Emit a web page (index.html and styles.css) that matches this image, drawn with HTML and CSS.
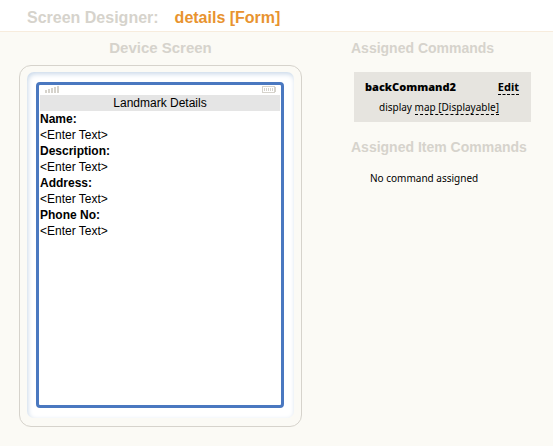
FILE: index.html
```html
<!DOCTYPE html>
<html lang="en">
<head>
<meta charset="utf-8">
<title>Screen Designer</title>
<link rel="stylesheet" href="styles.css">
</head>
<body>
<header class="header">
  <h1 class="title">Screen Designer:</h1>
  <span class="subject">details [Form]</span>
</header>
<main class="designer">
  <section class="device">
    <h2 class="heading heading-center">Device Screen</h2>
    <div class="frame">
      <div class="bezel">
        <div class="screen">
          <div class="status">
            <svg width="14" height="7" viewBox="0 0 14 7" shape-rendering="crispEdges" aria-hidden="true"><path fill="#d6d3cc" d="M0 4h2v3H0zM3 3h2v4H3zM6 2h2v5H6zM9 1h2v6H9zM12 0h2v7h-2z"/></svg>
            <svg width="14" height="7" viewBox="0 0 14 7" shape-rendering="crispEdges" aria-hidden="true"><path fill="#d6d3cc" fill-rule="evenodd" d="M0 0h13v7H0zM1 1v5h11V1z"/><path fill="#d6d3cc" d="M13 1h1v5h-1zM2 2h1v3H2zM4 2h1v3H4zM6 2h1v3H6zM8 2h1v3H8zM10 2h1v3h-1z"/></svg>
          </div>
          <h3 class="form-title">Landmark Details</h3>
          <dl class="fields">
            <dt>Name:</dt><dd>&lt;Enter Text&gt;</dd>
            <dt>Description:</dt><dd>&lt;Enter Text&gt;</dd>
            <dt>Address:</dt><dd>&lt;Enter Text&gt;</dd>
            <dt>Phone No:</dt><dd>&lt;Enter Text&gt;</dd>
          </dl>
        </div>
      </div>
    </div>
  </section>
  <aside class="commands">
    <h2 class="heading">Assigned Commands</h2>
    <div class="command">
      <div class="command-head">
        <strong class="command-name">backCommand2</strong>
        <a class="link" href="#">Edit</a>
      </div>
      <p class="command-action">display <a class="link" href="#">map [Displayable]</a></p>
    </div>
    <h2 class="heading">Assigned Item Commands</h2>
    <p class="empty">No command assigned</p>
  </aside>
</main>
</body>
</html>
```
FILE: styles.css
```css
* {
  box-sizing: border-box;
}

body {
  margin: 0;
  min-height: 100vh;
  background: #fbfaf5;
  color: #000;
  font-family: "Liberation Sans", Arial, sans-serif;
  font-size: 12px;
  line-height: 16px;
}

h1, h2, h3, p, dl, dd {
  margin: 0;
}

.header {
  display: flex;
  gap: 16px;
  padding: 8px 27px 4px;
  border-bottom: 1px solid #f7ecdd;
  background: #fff;
  font-size: 16px;
  font-weight: bold;
  line-height: 19px;
}

.title {
  font-size: 16px;
  color: #d6d3cc;
}

.subject {
  color: #e8932f;
}

.designer {
  display: grid;
  grid-template-columns: 283fr 202fr;
  gap: 49px;
  padding: 8px 0 19px 19px;
}

.heading {
  color: #d6d3cc;
  font-size: 14px;
  line-height: 16px;
}

.heading-center {
  font-size: 15px;
  text-align: center;
}

.frame {
  margin-top: 9px;
  padding: 6px 7px 8px;
  border: 1px solid #d6d3cc;
  border-radius: 12px;
}

.bezel {
  padding: 10px;
  padding-left: 9px;
  border-radius: 7px;
  background: #fff;
  box-shadow: inset 1px 2px 5px #c9d8e9;
}

.screen {
  min-height: 326px;
  border: 3px solid #4a78c0;
  border-radius: 4px;
}

.status {
  display: flex;
  justify-content: space-between;
  padding: 1px 5px 2px 6px;
}

.form-title {
  margin: 0 1px;
  background: #e5e5e5;
  font-size: 12px;
  font-weight: normal;
  text-align: center;
}

.fields {
  padding-left: 1px;
}

.fields dt {
  font-weight: bold;
}

.commands {
  font-family: "Noto Sans", sans-serif;
  font-size: 10px;
}

.commands .heading {
  font-family: "Liberation Sans", Arial, sans-serif;
}

.command {
  margin: 16px 22px 17px 3px;
  padding: 7px 12px 7px 11px;
  background: #e6e4df;
}

.command-head {
  display: flex;
  align-items: baseline;
  justify-content: space-between;
  font-size: 11px;
  font-weight: bold;
  line-height: 15px;
}

.command-action {
  margin-top: 4px;
  padding-left: 14px;
}

.link {
  border-bottom: 1px dashed #000;
  color: #000;
  text-decoration: none;
}

.command-head .link {
  line-height: 14px;
}

.empty {
  margin: 15px 0 0 19px;
}
```
